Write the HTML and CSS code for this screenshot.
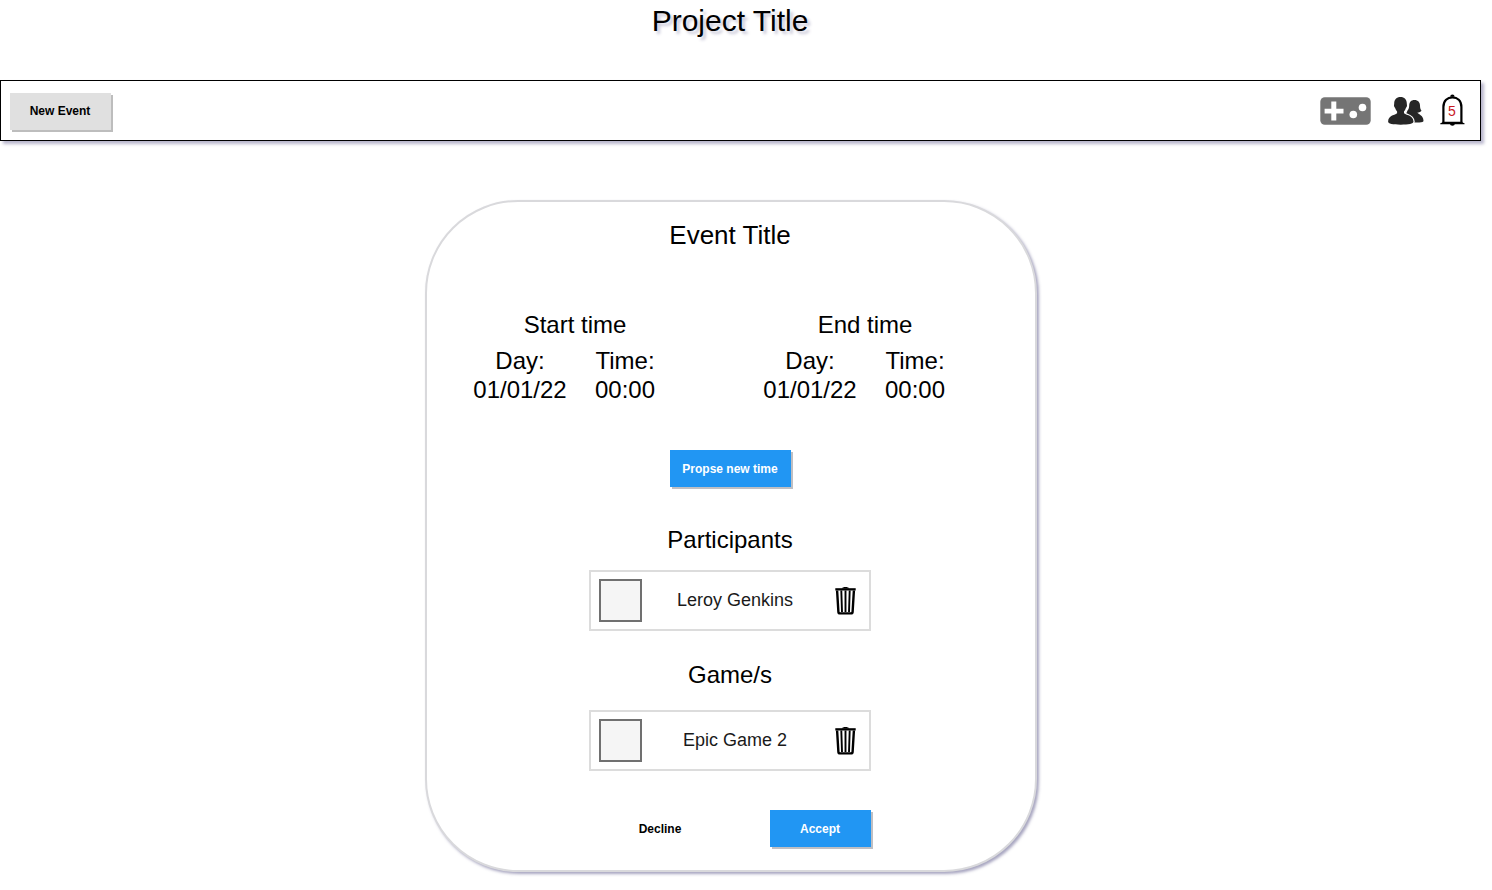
FILE: index.html
```html
<!DOCTYPE html>
<html lang="en">
<head>
<meta charset="utf-8">
<title>Project Title</title>
<link rel="stylesheet" href="styles.css">
</head>
<body>
<h1 class="title">Project Title</h1>
<header class="bar">
  <button class="btn btn-grey">New Event</button>
  <nav class="icons">
    <svg class="pad" width="51" height="28" viewBox="0 0 51 28">
      <rect x=".3" y=".3" width="50.400" height="27.400" rx="4.500" fill="#757575"/>
      <path d="M11.300 4.600h5v7.200h7.200v4.600h-7.200v7.200h-5v-7.200H4.600v-4.600h6.700z" fill="#fff"/>
      <circle cx="33.300" cy="17.500" r="3.800" fill="#fff"/>
      <circle cx="42.500" cy="10.500" r="3.800" fill="#fff"/>
    </svg>
    <svg class="people" width="36" height="28" viewBox="0 0 36 28">
      <path d="M26.500 3c3.600 0 5.400 2.400 5.500 5.500.1 2.200.2 3.600 1.500 5.200-.8 1.300-2.200 1.700-3.900 1.800v.6c1.500 1.600 5.600 2.200 5.900 7.700.1 1.200-1.500 1.700-4.200 1.700h-8L18 17l1.500-3.500c1.300-1.500 1.600-3.100 1.700-5.100C21.300 5.200 23 3 26.500 3z" fill="#262626"/>
      <path d="M12.500 0c3.900 0 6.300 2.500 6.300 6.400 0 1 .4 1.500.1 2.800-.2 1-.8 1.100-1.100 2.100-.4 1.400-1 2.400-1.800 3.200v1.800c1.700 1.800 9.100 1.700 9.500 8.300.1 2.200-5 3.100-12.800 3.100S0 26.800.1 24.600c.3-6.600 7.300-6.500 9-8.300v-1.800c-.8-.8-1.500-1.800-1.900-3.200-.3-1-.9-1.100-1.100-2.100-.3-1.300.1-1.800.1-2.800 0-3.900 2.400-6.400 6.300-6.400z" fill="#262626" stroke="#fff" stroke-width="2.400" paint-order="stroke"/>
    </svg>
    <svg class="bell" width="26" height="32" viewBox="0 0 26 32">
      <path d="M3.400 28V13C3.400 6.500 7.500 3.300 12.400 3.300S21.400 6.500 21.400 13v15" fill="#fff" stroke="#000" stroke-width="2.200"/>
      <path d="M.3 30.300v-1c1.200-.3 1.800-.8 2.200-1.600h19.800c.4.800 1 1.300 2.200 1.600v1z" fill="#000"/>
      <path d="M10.200 2.800a2.200 2.200 0 0 1 4.400 0zM10 30a2.400 1.700 0 0 0 4.800 0z" fill="#000"/>
      <text class="count" x="12" y="21.500">5</text>
    </svg>
  </nav>
</header>
<main class="card">
  <h2 class="event">Event Title</h2>
  <section class="times">
    <div class="period">
      <h3 class="heading">Start time</h3>
      <div class="pair"><p class="value">Day:<br>01/01/22</p><p class="value">Time:<br>00:00</p></div>
    </div>
    <div class="period">
      <h3 class="heading">End time</h3>
      <div class="pair"><p class="value">Day:<br>01/01/22</p><p class="value">Time:<br>00:00</p></div>
    </div>
  </section>
  <button class="btn btn-blue propose">Propse new time</button>
  <h3 class="heading participants">Participants</h3>
  <div class="item">
    <span class="thumb"></span><span class="name">Leroy Genkins</span>
    <svg class="trash" width="21" height="28" viewBox="0 0 21 28">
      <path d="M7 1.500c0-2 7-2 7 0" fill="#000"/>
      <path d="M.3 1.200h20.400v2.300H.3z" fill="#000"/>
      <path d="M2.100 3.500l1.300 21.400q.1 1.500 1.600 1.500h11q1.500 0 1.600-1.500L18.900 3.500" fill="none" stroke="#000" stroke-width="2.400"/>
      <path d="M6.300 3.500l.7 21.500M10.500 3.500V25M14.700 3.500L14 25" fill="none" stroke="#000" stroke-width="1.900"/>
    </svg>
  </div>
  <h3 class="heading games">Game/s</h3>
  <div class="item">
    <span class="thumb"></span><span class="name">Epic Game 2</span>
    <svg class="trash" width="21" height="28" viewBox="0 0 21 28">
      <path d="M7 1.500c0-2 7-2 7 0" fill="#000"/>
      <path d="M.3 1.200h20.400v2.300H.3z" fill="#000"/>
      <path d="M2.100 3.500l1.300 21.400q.1 1.500 1.600 1.500h11q1.500 0 1.600-1.500L18.900 3.500" fill="none" stroke="#000" stroke-width="2.400"/>
      <path d="M6.300 3.500l.7 21.500M10.500 3.500V25M14.700 3.500L14 25" fill="none" stroke="#000" stroke-width="1.900"/>
    </svg>
  </div>
  <div class="actions">
    <button class="btn btn-plain">Decline</button>
    <button class="btn btn-blue">Accept</button>
  </div>
</main>
</body>
</html>
```
FILE: styles.css
```css
* { box-sizing: border-box; margin: 0; }
body {
  height: 890px;
  overflow: hidden;
  background: #fff;
  color: #000;
  font-family: "Liberation Sans", Arial, sans-serif;
}
.title {
  width: 1460px;
  height: 80px;
  padding-top: 1px;
  font-size: 30px;
  font-weight: 400;
  line-height: 40px;
  text-align: center;
  text-shadow: 3px 3px 3px rgba(80, 75, 130, .3);
}
.bar {
  display: flex;
  justify-content: space-between;
  align-items: flex-start;
  width: 1481px;
  height: 61px;
  padding: 12px 14px 0 9px;
  border: 1px solid #000;
  background: #fff;
  box-shadow: 3px 3px 3px rgba(80, 75, 130, .4);
}
.btn {
  display: block;
  width: 101px;
  height: 37px;
  padding: 0;
  border: 0;
  font: bold 12px/36px "Liberation Sans", Arial, sans-serif;
  text-align: center;
}
.btn-grey { padding: 0 1px 2px 0; background: #e0e0e0; color: #000; box-shadow: 2px 2px 0 #bdbdbd; }
.btn-blue { background: #2196f3; color: #fff; box-shadow: 2px 2px 0 #bfbfc3; }
.btn-plain { background: none; color: #000; }
.icons { display: flex; align-items: flex-start; padding-top: 4px; }
.people { margin-left: 17px; }
.bell { margin: -3px 0 0 16px; }
.count { fill: #c8181e; font-size: 14px; text-anchor: middle; }
.card {
  display: flex;
  flex-direction: column;
  align-items: center;
  width: 612px;
  height: 672px;
  margin: 58.500px 0 0 425px;
  padding-right: 2px;
  border: 2px solid #d9d9dc;
  border-radius: 93px;
  background: #fff;
  box-shadow: 2px 2px 3px rgba(80, 75, 130, .5);
}
.event {
  margin-top: 18.500px;
  font-size: 26px;
  font-weight: 400;
  line-height: 30px;
}
.times {
  display: flex;
  gap: 90px;
  width: 606px;
  margin-top: 60px;
  padding-left: 38px;
}
.period { width: 200px; }
.heading { font-size: 24px; font-weight: 400; line-height: 30px; text-align: center; }
.period .heading { padding-left: 20px; }
.pair { display: flex; margin-top: 6px; }
.value { flex: none; width: 110px; font-size: 24px; line-height: 29px; text-align: center; }
.pair .value:last-child { width: 100px; }
.propose { width: 121px; margin-top: 46px; }
.participants { margin-top: 38px; }
.item {
  display: flex;
  align-items: center;
  width: 282px;
  height: 61px;
  margin-top: 15px;
  padding: 0 13px 0 8px;
  border: 2px solid #dcdcdc;
}
.thumb { width: 43px; height: 43px; border: 2px solid #707070; background: #f5f5f5; }
.name { width: 180px; padding: 0 0 2px 6px; font-size: 18px; line-height: 22px; text-align: center; color: #1a1a1a; }
.trash { margin-left: 13px; }
.games { margin-top: 29px; }
.games + .item { margin-top: 20px; }
.actions { display: flex; justify-content: space-between; width: 261px; margin: 39px 0 0 20px; }
```
